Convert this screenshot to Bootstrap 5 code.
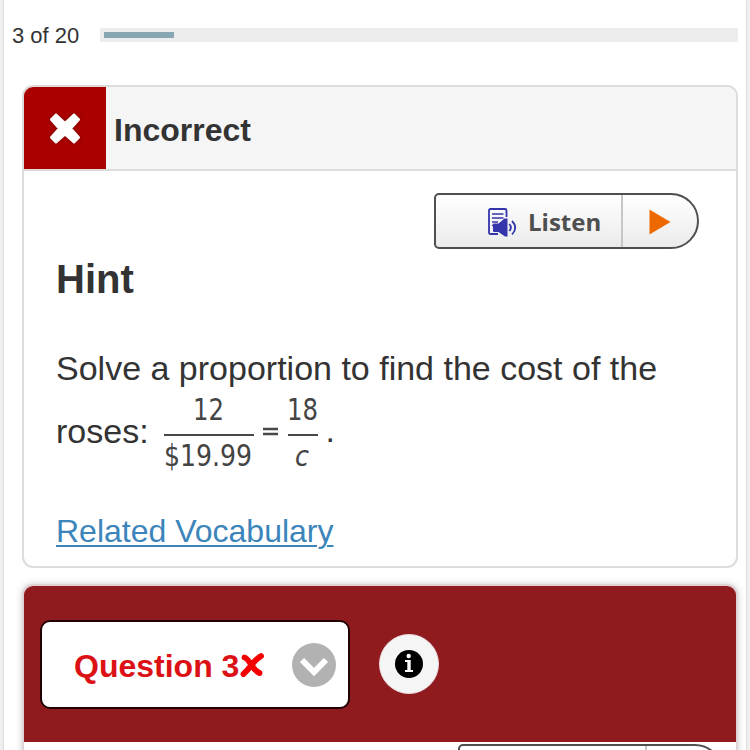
<!DOCTYPE html>
<html lang="en">
<head>
<meta charset="utf-8">
<meta name="viewport" content="width=device-width, initial-scale=1">
<title>Question 3 of 20</title>
<link href="https://cdn.jsdelivr.net/npm/bootstrap@5.3.0/dist/css/bootstrap.min.css" rel="stylesheet">
<style>
body{font-family:"Liberation Sans",Arial,sans-serif;color:#333;background:#f0f0f0;height:750px;overflow:hidden}
.page-sheet{width:742px;height:750px;margin-left:4px;background:#fff;box-shadow:0 0 2px #bbb;overflow:hidden}
.progress-line{height:71px;padding-left:8px}
.count{width:88px;font-size:22px;line-height:28px}
.track{width:638px;height:14px;background:#ededed;border-radius:1px;padding:4px;margin-bottom:2px}
.track-fill{height:6px;background:#88a7b3}
.feedback{width:716px;height:483px;margin:14px 0 0 18px;border:2px solid #dcdcdc;border-radius:11px;background:#fff;overflow:hidden}
.feedback-head{height:84px;background:#f5f5f5;border-bottom:2px solid #dcdcdc}
.wrong-box{width:82px;height:82px;background:#a00}
.feedback-title{font-size:32px;line-height:40px;padding:4px 0 0 8px}
.feedback-body{padding:22px 37px 0 32px}
.listen{width:265px;height:56px;border:2px solid #4f4f4f;border-radius:5px 28px 28px 5px;background:linear-gradient(#fff,#ebebeb);overflow:hidden}
.listen-main{width:187px;height:100%;padding:2px 0 0 51px;border-right:2px solid #c6c6c6}
.listen-label{font:700 24px/34px "Open Sans","Noto Sans",sans-serif;color:#4f4f4f;margin-left:11px}
.listen-play{width:74px;padding-top:2px}
.hint{font-size:40px;line-height:48px;margin:6px 0 0}
.copy{font-size:34px;line-height:44px;margin-top:43px;white-space:nowrap}
.equation-row{font-size:34px;line-height:44px;height:84px;margin-top:-1px}
.vocab{font-size:32px;line-height:40px;margin-top:38px}
.vocab a{color:#3c85bb;text-decoration-thickness:2px;text-underline-offset:3px}
.question{width:716px;height:170px;margin:16px 0 0 18px;border:2px solid #dfd3d4;border-radius:11px 11px 0 0;border-bottom:0;box-shadow:0 0 7px #ccc;background:#fff;overflow:hidden}
.question-head{height:156px;background:#901b1f;padding-left:16px}
.picker{width:310px;height:89px;border:2px solid #210003;border-radius:10px;background:#fff;padding:1px 12px 0 32px}
.picker-label{font-size:32px;line-height:40px;font-weight:700;color:#dc1116;padding-top:2px}
.info{width:60px;height:60px;margin-left:29px;border-radius:50%;background:#f5f5f5;border:1px solid #e9dcdd}
.next-listen{margin:2px 0 0 434px}
svg{display:block;flex:none}
</style>
<script src="https://cdn.jsdelivr.net/npm/bootstrap@5.3.0/dist/js/bootstrap.bundle.min.js"></script>
</head>
<body>
<main class="page-sheet">
  <div class="progress-line d-flex align-items-center">
    <span class="count">3 of 20</span>
    <div class="track"><div class="track-fill" style="width:11.1%"></div></div>
  </div>

  <section class="feedback">
    <div class="feedback-head d-flex align-items-center">
      <div class="wrong-box d-flex align-items-center justify-content-center">
        <svg width="42" height="42" viewBox="0 0 42 42" aria-hidden="true"><defs><filter id="soft" x="-30%" y="-30%" width="160%" height="160%"><feDropShadow dx="0" dy="0" stdDeviation="1.5" flood-color="#400" flood-opacity=".7"/></filter></defs><path d="M12 7.500 21 16 30 7.500 35 12.500 27 21.500 35 30.500 30 35.500 21 27.500 12 35.500 7 30.500 15 21.500 7 12.500Z" fill="#fff" stroke="#fff" stroke-width="2" stroke-linejoin="round" filter="url(#soft)"/></svg>
      </div>
      <strong class="feedback-title">Incorrect</strong>
    </div>
    <div class="feedback-body">
      <div class="listen d-flex ms-auto">
        <div class="listen-main d-flex align-items-center">
          <svg width="30" height="30" viewBox="0 0 30 30" aria-hidden="true"><path d="M11 27H3.500Q2 27 2 25.500V3.500Q2 2 3.500 2H18Q19.500 2 19.500 3.500V10" fill="none" stroke="#3434ab" stroke-width="1.800"/><path d="M5 7H16.500M5 11H16.500M5 15H11M5 18.500H7" stroke="#3434ab" stroke-width="1.700"/><path d="M6 17.500Q6 16.500 7 16.500H11.500L17.500 11.500H20.500V29.500H18L11.500 25H7Q6 25 6 24Z" fill="#3434ab"/><path d="M22.300 17Q25.500 20.500 22.300 24M25 14Q31.500 20.500 25 27.500" fill="none" stroke="#3434ab" stroke-width="1.800"/></svg>
          <span class="listen-label">Listen</span>
        </div>
        <div class="listen-play d-flex align-items-center justify-content-center"><svg width="22" height="26" viewBox="0 0 22 26" aria-hidden="true"><path d="M.5.5 21.500 13 .5 25.500Z" fill="#ed6900"/></svg></div>
      </div>
      <h1 class="hint fw-bold">Hint</h1>
      <div class="copy">Solve a proportion to find the cost of the</div>
      <div class="equation-row d-flex align-items-center">
        <span>roses:</span>
        <svg width="190" height="84" viewBox="149 389 190 84" font-family="DejaVu Sans" font-size="31" fill="#444">
          <text x="193" y="420" textLength="31" lengthAdjust="spacingAndGlyphs">12</text>
          <path d="M164 435H254M288 435H318" stroke="#484848" stroke-width="2"/>
          <text x="164" y="466" textLength="88" lengthAdjust="spacingAndGlyphs">$19.99</text>
          <path d="M263 429H278M263 434H278" stroke="#484848" stroke-width="2.500"/>
          <text x="287" y="420" textLength="31" lengthAdjust="spacingAndGlyphs">18</text>
          <text x="295" y="466" font-size="28" font-style="italic" textLength="14" lengthAdjust="spacingAndGlyphs">c</text>
          <text x="325.500" y="442" font-family="Liberation Sans" font-size="34" fill="#333">.</text>
        </svg>
      </div>
      <div class="vocab"><a href="#">Related Vocabulary</a></div>
    </div>
  </section>

  <section class="question">
    <div class="question-head d-flex align-items-center">
      <div class="picker d-flex align-items-center">
        <span class="picker-label">Question 3</span>
        <svg width="25" height="26" viewBox="0 0 25 26" aria-hidden="true"><path d="M5.500 5.500Q8 6 12 12.500T20.500 21M22 4Q17 7 12.500 13T4.500 22" fill="none" stroke="#f40000" stroke-width="5.800" stroke-linecap="round"/></svg>
        <svg class="ms-auto" width="44" height="44" viewBox="0 0 44 44" aria-hidden="true"><circle cx="22" cy="22" r="22" fill="#b2b2b2"/><path d="M10 17 22 29 34 17" fill="none" stroke="#fff" stroke-width="6"/></svg>
      </div>
      <div class="info d-flex align-items-center justify-content-center">
        <svg width="28" height="28" viewBox="0 0 28 28" aria-hidden="true"><circle cx="14" cy="14" r="14" fill="#000"/><circle cx="13.700" cy="6" r="2.200" fill="#fff"/><path d="M10 10H15.700V20H18V22H10V20H12.300V12H10Z" fill="#fff"/></svg>
      </div>
    </div>
    <div class="listen next-listen d-flex"><div class="listen-main"></div></div>
  </section>
</main>
</body>
</html>
